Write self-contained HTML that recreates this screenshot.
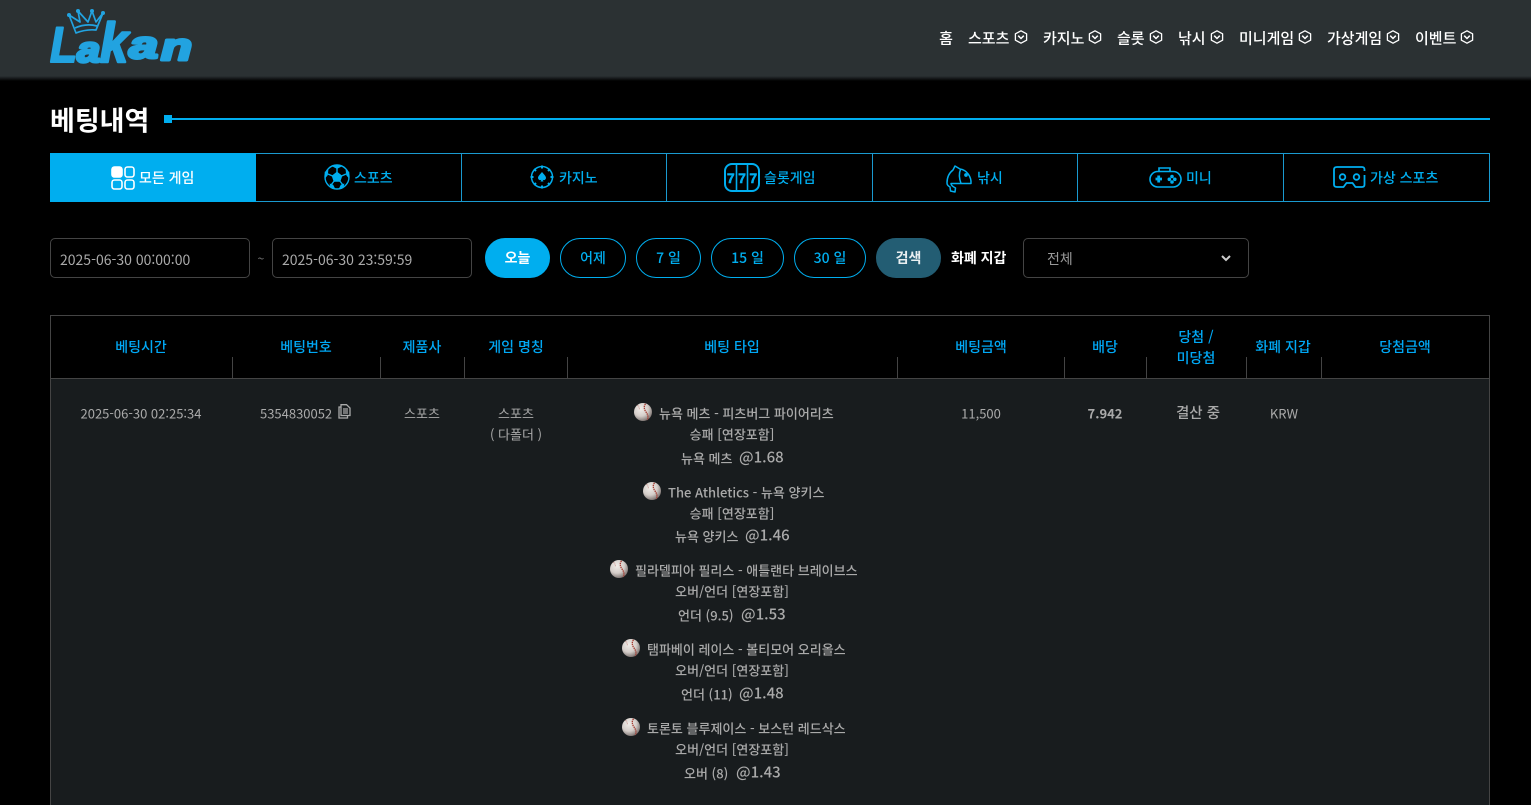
<!DOCTYPE html>
<html lang="ko"><head><meta charset="utf-8"><title>베팅내역</title>
<style>
html,body{margin:0;padding:0;background:#000;width:1531px;height:805px;overflow:hidden}
body{position:relative;font-family:"Noto Sans CJK KR","Liberation Sans",sans-serif;color:#aaa;font-size:13px}
.t{position:absolute;transform:translate(-50%,-50%);white-space:nowrap;line-height:1}
.l{position:absolute;transform:translateY(-50%);white-space:nowrap;line-height:1}
.a{position:absolute}
svg{position:absolute;overflow:visible}
.hd{position:absolute;left:0;top:0;width:1531px;height:76px;background:#2b3133}
.sh{position:absolute;left:0;top:76px;width:1531px;height:5px;background:linear-gradient(#2b3133,#000)}
.nav{color:#fff;font-size:15px;font-weight:500;top:38px}
.tab{position:absolute;top:153px;height:49px;box-sizing:border-box;border:1px solid #1a9ad0;border-left:0}
.tl{color:#00aeef;font-size:14px;font-weight:500;top:178px}
.inp{position:absolute;top:238px;height:40px;width:200px;box-sizing:border-box;border:1px solid #444;border-radius:5px;background:#000}
.btn{position:absolute;top:238px;height:40px;box-sizing:border-box;border:1px solid #00aeef;border-radius:20px;color:#00aeef;font-size:14px;font-weight:500;text-align:center;line-height:38px}
.th{color:#00a8f5;font-size:14px;font-weight:500}
.sep{position:absolute;top:357px;width:1px;height:21px;background:#444}
.g{color:#aaa;font-size:13px;font-weight:500}
.o{color:#aaa;font-size:15px;font-weight:500}
</style></head><body>
<svg width="0" height="0" style="position:absolute"><defs>
<radialGradient id="bg" cx="38%" cy="32%" r="75%"><stop offset="0" stop-color="#f2eeea"/><stop offset=".55" stop-color="#d4cdc9"/><stop offset="1" stop-color="#6f6664"/></radialGradient>
<symbol id="ball" viewBox="0 0 18 18"><circle cx="9" cy="9" r="9" fill="url(#bg)"/><path d="M11.500 .8C9.800 3 9.800 6 12 9s2.500 5.600 1.200 8" fill="none" stroke="#a53a30" stroke-width="1.300" stroke-dasharray="1.400 .7"/><path d="M3.500 2.200C5.200 3.600 5.600 5.400 5 7" fill="none" stroke="#b9726b" stroke-width=".7" stroke-dasharray="1 .8"/></symbol>
<symbol id="chev" viewBox="0 0 14 14"><path d="M7 .8L12.600 3.800V10.200L7 13.200L1.400 10.200V3.800Z" fill="none" stroke="#fff" stroke-width="1.300" stroke-linejoin="round"/><path d="M4.200 5.700L7 8.500L9.800 5.700" fill="none" stroke="#fff" stroke-width="1.500"/></symbol>
</defs></svg>

<div class="hd"></div><div class="sh"></div>
<!-- logo -->
<svg style="left:50px;top:5px" width="146" height="64" viewBox="0 0 146 64">
<g transform="translate(0,2)">
<g fill="none" stroke="#22a3e0" stroke-width="1.700" stroke-linejoin="round"><path d="M26 26L19 8L30 15L28 4L38 15L42 4L46 15L53 6L46 23Q36 22 26 26Z"/><path d="M25 21Q36 16 47 19"/></g>
<g fill="#22a3e0"><circle cx="19" cy="8" r="2"/><circle cx="28" cy="4" r="2"/><circle cx="42" cy="4" r="2"/><circle cx="53" cy="6" r="2"/></g>
</g>
<g font-family="Liberation Sans" font-style="italic" font-weight="700" fill="#22a3e0" stroke="#22a3e0" stroke-linejoin="round">
<text x="0" y="57" font-size="50" stroke-width="2" textLength="27" lengthAdjust="spacingAndGlyphs">L</text>
<text x="27" y="57" font-size="36" stroke-width="3" textLength="23" lengthAdjust="spacingAndGlyphs">a</text>
<text x="50" y="57" font-size="56" stroke-width="2.500" textLength="28" lengthAdjust="spacingAndGlyphs">k</text>
<text x="79" y="53" font-size="38" stroke-width="3" textLength="29" lengthAdjust="spacingAndGlyphs">a</text>
<text x="111" y="55" font-size="38" stroke-width="3" textLength="31" lengthAdjust="spacingAndGlyphs">n</text>
</g>
</svg>
<!-- nav -->
<div class="t nav" style="left:946px">홈</div>
<div class="l nav" style="left:968px">스포츠</div><svg style="left:1014px;top:30px" width="14" height="14"><use href="#chev"/></svg>
<div class="l nav" style="left:1043px">카지노</div><svg style="left:1088px;top:30px" width="14" height="14"><use href="#chev"/></svg>
<div class="l nav" style="left:1117px">슬롯</div><svg style="left:1149px;top:30px" width="14" height="14"><use href="#chev"/></svg>
<div class="l nav" style="left:1178px">낚시</div><svg style="left:1210px;top:30px" width="14" height="14"><use href="#chev"/></svg>
<div class="l nav" style="left:1239px">미니게임</div><svg style="left:1298px;top:30px" width="14" height="14"><use href="#chev"/></svg>
<div class="l nav" style="left:1327px">가상게임</div><svg style="left:1386px;top:30px" width="14" height="14"><use href="#chev"/></svg>
<div class="l nav" style="left:1415px">이벤트</div><svg style="left:1460px;top:30px" width="14" height="14"><use href="#chev"/></svg>
<!-- title -->
<div class="l" style="left:50px;top:119px;color:#fff;font-size:27px;font-weight:700">베팅내역</div>
<div class="a" style="left:164px;top:115px;width:8px;height:8px;background:#00aeef"></div>
<div class="a" style="left:172px;top:118px;width:1318px;height:2px;background:#00aeef"></div>
<!-- tabs -->
<div class="tab" style="left:50px;width:206px;background:#00aeef;border-color:#00aeef"></div>
<div class="tab" style="left:256px;width:206px"></div>
<div class="tab" style="left:462px;width:205px"></div>
<div class="tab" style="left:667px;width:206px"></div>
<div class="tab" style="left:873px;width:205px"></div>
<div class="tab" style="left:1078px;width:206px"></div>
<div class="tab" style="left:1284px;width:206px"></div>
<svg style="left:111px;top:166px" width="24" height="24" fill="none" stroke="#fff" stroke-width="1.600"><rect x="1" y="1" width="10" height="10" rx="2.500" fill="#fff"/><rect x="14" y="1" width="9" height="10" rx="2.500"/><rect x="1" y="14" width="10" height="9" rx="2.500"/><rect x="14" y="14" width="9" height="9" rx="2.500"/></svg>
<div class="l tl" style="left:139px;color:#fff">모든 게임</div>
<svg style="left:324px;top:164px" width="26" height="26" fill="none" stroke="#00aeef" stroke-width="1.400"><circle cx="13" cy="13" r="12"/><path d="M13 8.500L17.500 12L15.800 17H10.200L8.500 12Z" fill="#00aeef"/><path d="M13 8.500V4M17.500 12L22 10M15.800 17L19 21M10.200 17L7 21M8.500 12L4 10"/><path d="M9 2.500L13 4.500L17 2.500L13 1ZM22 6.500L22.500 11L25 14L25 8ZM4 6.500L3.500 11L1 14L1 8ZM6 20L7 24L11 25L9 21ZM20 20L19 24L15 25L17 21Z" fill="#00aeef" stroke-width=".6"/></svg>
<div class="l tl" style="left:354px">스포츠</div>
<svg style="left:530px;top:165px" width="24" height="24" fill="none" stroke="#00aeef" stroke-width="1.500"><circle cx="12" cy="12" r="10.500"/><path d="M12 7C14 9.500 16 11 16 13A2.200 2.200 0 0 1 12.700 14.800L13.500 16.500H10.500L11.300 14.800A2.200 2.200 0 0 1 8 13C8 11 10 9.500 12 7Z" fill="#00aeef" stroke="none"/><path d="M12 .5V3.500M12 20.500V23.500M.5 12H3.500M20.500 12H23.500M4 4L6 6M18 18L20 20M20 4L18 6M4 20L6 18" stroke-width="2"/></svg>
<div class="l tl" style="left:559px">카지노</div>
<svg style="left:724px;top:163px" width="36" height="29" fill="none" stroke="#00aeef" stroke-width="2"><rect x="1" y="1" width="34" height="27" rx="7"/><path d="M12.500 1V28M23.500 1V28" stroke-width="1.600"/><text x="6.800" y="20" font-family="Liberation Sans" font-weight="700" font-size="14" text-anchor="middle" fill="#00aeef" stroke="#00aeef" stroke-width=".5">7</text><text x="18" y="20" font-family="Liberation Sans" font-weight="700" font-size="14" text-anchor="middle" fill="#00aeef" stroke="#00aeef" stroke-width=".5">7</text><text x="29.300" y="20" font-family="Liberation Sans" font-weight="700" font-size="14" text-anchor="middle" fill="#00aeef" stroke="#00aeef" stroke-width=".5">7</text></svg>
<div class="l tl" style="left:764px">슬롯게임</div>
<svg style="left:946px;top:165px" width="26" height="28" fill="none" stroke="#00aeef" stroke-width="1.500" stroke-linejoin="round"><path d="M7 5C3 8 1 13 1 18C1 20 2 21 4 22L4.500 26L9 27L9.500 23C8 22 5 21 5 18.500H25C25.500 12 21 5 14 4L9 1Z"/><path d="M14.500 4.500C13 8 13 13 15 18.500"/><circle cx="20" cy="10" r="1.100" fill="#00aeef"/></svg>
<div class="l tl" style="left:977px">낚시</div>
<svg style="left:1149px;top:167px" width="33" height="21" fill="none" stroke="#00aeef" stroke-width="1.600"><path d="M10 4.500V1H21V4.500"/><rect x="1" y="4.500" width="31" height="15.500" rx="7.700"/><path d="M6.500 12H13M9.700 8.500V15.500" stroke-width="2.800"/><circle cx="23" cy="9.500" r="1" fill="#00aeef"/><circle cx="23" cy="15" r="1" fill="#00aeef"/><circle cx="20.300" cy="12.300" r="1" fill="#00aeef"/><circle cx="25.800" cy="12.300" r="1" fill="#00aeef"/></svg>
<div class="l tl" style="left:1186px">미니</div>
<svg style="left:1333px;top:166px" width="33" height="23" fill="none" stroke="#00aeef" stroke-width="1.800"><path d="M31.500 5V3.500Q31.500 1 29 1H4Q1 1 1 3.500V18.500Q1 21 4 21H10.500L13.500 17H19.500L22.500 21H29Q31.500 21 31.500 18.500V9"/><circle cx="9.500" cy="11" r="2.800"/><circle cx="23.500" cy="11" r="2.800"/></svg>
<div class="l tl" style="left:1370px">가상 스포츠</div>
<!-- filters -->
<div class="inp" style="left:50px"></div><div class="l" style="left:60px;top:259.500px;font-size:14px;color:#aaa">2025-06-30 00:00:00</div>
<div class="t" style="left:261px;top:259px;font-size:12px;color:#777">~</div>
<div class="inp" style="left:272px"></div><div class="l" style="left:282px;top:259.500px;font-size:14px;color:#aaa">2025-06-30 23:59:59</div>
<div class="btn" style="left:485px;width:65px;background:#00aeef;color:#fff;font-weight:700">오늘</div>
<div class="btn" style="left:560px;width:66px">어제</div>
<div class="btn" style="left:636px;width:65px">7 일</div>
<div class="btn" style="left:711px;width:73px">15 일</div>
<div class="btn" style="left:794px;width:72px">30 일</div>
<div class="btn" style="left:876px;width:65px;background:#235d73;border-color:#235d73;color:#e8eef0;font-weight:700">검색</div>
<div class="l" style="left:951px;top:258px;color:#fff;font-size:14px;font-weight:700">화폐 지갑</div>
<div class="inp" style="left:1023px;width:226px"></div>
<div class="l" style="left:1047px;top:258.500px;font-size:14px;color:#999">전체</div>
<svg style="left:1221px;top:255px" width="10" height="7" fill="none" stroke="#ccc" stroke-width="2"><path d="M1 1L5 5L9 1"/></svg>
<!-- table -->
<div class="a" style="left:50px;top:315px;width:1440px;height:500px;box-sizing:border-box;border:1px solid #444;background:#000"></div>
<div class="a" style="left:51px;top:379px;width:1438px;height:430px;background:#181c1e"></div>
<div class="a" style="left:51px;top:378px;width:1438px;height:1px;background:#444"></div>
<div class="sep" style="left:232px"></div><div class="sep" style="left:380px"></div><div class="sep" style="left:464px"></div><div class="sep" style="left:567px"></div><div class="sep" style="left:897px"></div><div class="sep" style="left:1064px"></div><div class="sep" style="left:1146px"></div><div class="sep" style="left:1246px"></div><div class="sep" style="left:1321px"></div>
<div class="t th" style="left:141px;top:347px">베팅시간</div>
<div class="t th" style="left:306px;top:347px">베팅번호</div>
<div class="t th" style="left:422px;top:347px">제품사</div>
<div class="t th" style="left:516px;top:347px">게임 명칭</div>
<div class="t th" style="left:732px;top:347px">베팅 타입</div>
<div class="t th" style="left:981px;top:347px">베팅금액</div>
<div class="t th" style="left:1105px;top:347px">배당</div>
<div class="t th" style="left:1196px;top:337px">당첨 /</div>
<div class="t th" style="left:1196px;top:358px">미당첨</div>
<div class="t th" style="left:1283px;top:347px">화폐 지갑</div>
<div class="t th" style="left:1405px;top:347px">당첨금액</div>
<!-- row -->
<div class="t" style="left:141px;top:413px;color:#aaa;font-size:13px">2025-06-30 02:25:34</div>
<div class="l" style="left:260px;top:413px;color:#aaa;font-size:13px">5354830052</div>
<svg style="left:338px;top:404px" width="13" height="15" fill="none" stroke="#aaa" stroke-width="1.300"><path d="M3 .7H8.500L12 4V11.500H3Z"/><path d="M3 3H1V14H9.500V11.500M5 5H10M5 7H10M5 9H10"/></svg>
<div class="t" style="left:422px;top:413px;font-size:13px">스포츠</div>
<div class="t" style="left:516px;top:413px;font-size:13px">스포츠</div>
<div class="t" style="left:516px;top:434px;font-size:13px">( 다폴더 )</div>
<div class="t" style="left:981px;top:413px;font-size:13px">11,500</div>
<div class="t" style="left:1105px;top:413px;font-size:13px;font-weight:700">7.942</div>
<div class="t" style="left:1198px;top:413px;font-size:14.500px;font-weight:500">결산 중</div>
<div class="t" style="left:1284px;top:413px;font-size:13px">KRW</div>

<svg style="left:634px;top:403px" width="18" height="18"><use href="#ball"/></svg>
<div class="l g" style="left:659px;top:413px">뉴욕 메츠 - 피츠버그 파이어리츠</div>
<div class="t g" style="left:732px;top:434px">승패 [연장포함]</div>
<div class="l g" style="left:681px;top:458px">뉴욕 메츠</div><div class="l o" style="left:739px;top:457px">@1.68</div>

<svg style="left:643px;top:482px" width="18" height="18"><use href="#ball"/></svg>
<div class="l g" style="left:668px;top:492px">The Athletics - 뉴욕 양키스</div>
<div class="t g" style="left:732px;top:513px">승패 [연장포함]</div>
<div class="l g" style="left:675px;top:536px">뉴욕 양키스</div><div class="l o" style="left:745px;top:535px">@1.46</div>

<svg style="left:610px;top:560px" width="18" height="18"><use href="#ball"/></svg>
<div class="l g" style="left:635px;top:570px">필라델피아 필리스 - 애틀랜타 브레이브스</div>
<div class="t g" style="left:732px;top:591px">오버/언더 [연장포함]</div>
<div class="l g" style="left:678px;top:615px">언더 (9.5)</div><div class="l o" style="left:741px;top:614px">@1.53</div>

<svg style="left:622px;top:639px" width="18" height="18"><use href="#ball"/></svg>
<div class="l g" style="left:647px;top:649px">탬파베이 레이스 - 볼티모어 오리올스</div>
<div class="t g" style="left:732px;top:670px">오버/언더 [연장포함]</div>
<div class="l g" style="left:681px;top:694px">언더 (11)</div><div class="l o" style="left:739px;top:693px">@1.48</div>

<svg style="left:622px;top:718px" width="18" height="18"><use href="#ball"/></svg>
<div class="l g" style="left:647px;top:728px">토론토 블루제이스 - 보스턴 레드삭스</div>
<div class="t g" style="left:732px;top:749px">오버/언더 [연장포함]</div>
<div class="l g" style="left:684px;top:773px">오버 (8)</div><div class="l o" style="left:736px;top:772px">@1.43</div>
</body></html>
